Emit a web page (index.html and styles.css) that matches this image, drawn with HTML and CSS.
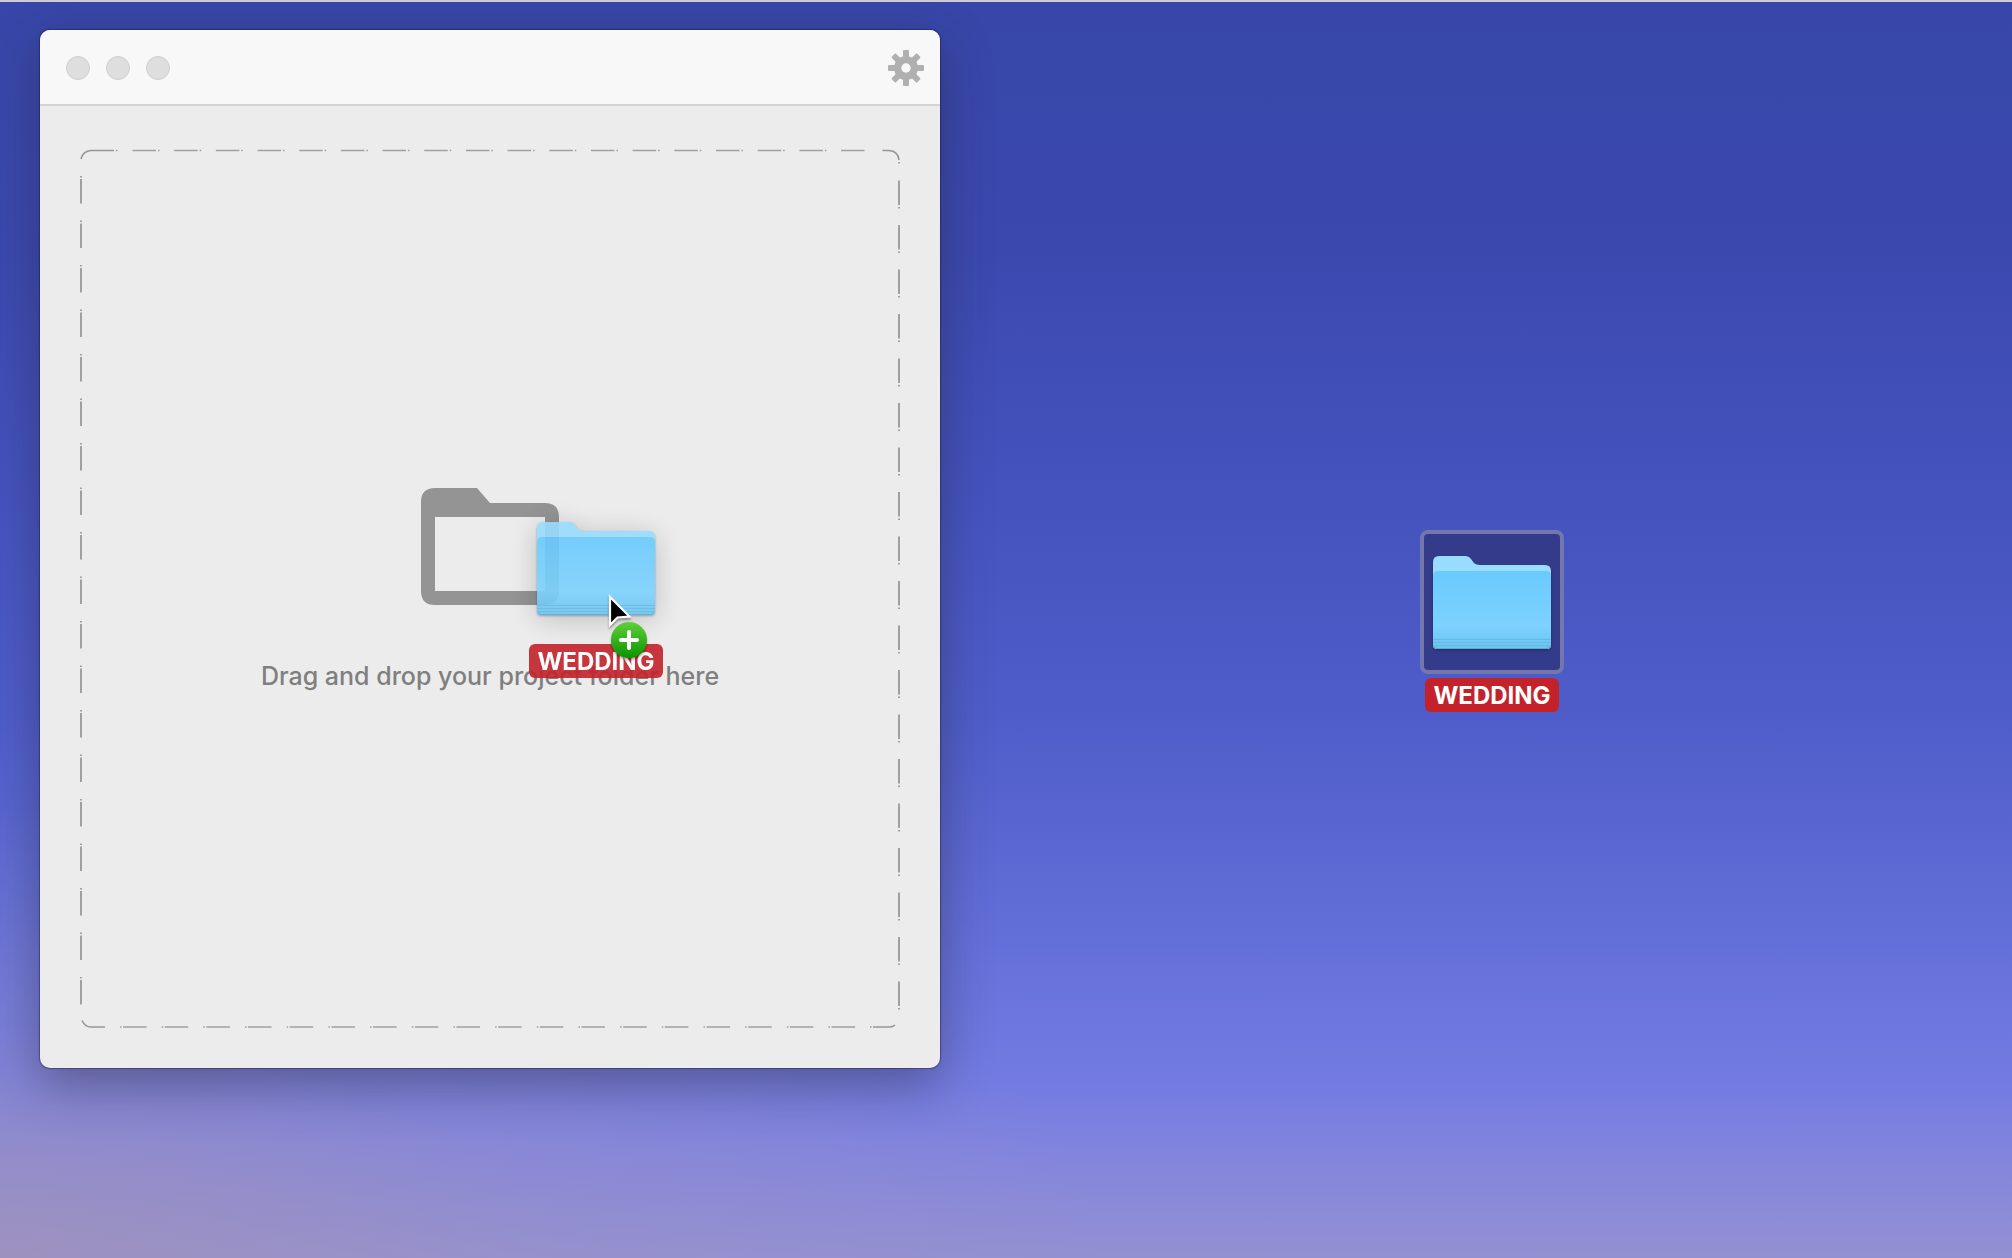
FILE: index.html
```html
<!DOCTYPE html>
<html lang="en">
<head>
<meta charset="utf-8">
<meta name="viewport" content="width=device-width, initial-scale=1">
<title>Project folder</title>
<link rel="stylesheet" href="styles.css">
</head>
<body>
<svg class="defs" aria-hidden="true">
  <defs>
    <linearGradient id="front" x1="0" y1="0" x2="0" y2="1">
      <stop offset="0" stop-color="#69cafd"/>
      <stop offset="0.7" stop-color="#7dd2fe"/>
      <stop offset="0.87" stop-color="#73c9f5"/>
      <stop offset="1" stop-color="#6cc5f0"/>
    </linearGradient>
    <linearGradient id="badge" x1="0" y1="0" x2="0" y2="1">
      <stop offset="0" stop-color="#5fd03a"/>
      <stop offset="1" stop-color="#0b9400"/>
    </linearGradient>
    <symbol id="folder" viewBox="0 0 118 93">
      <path fill="#98dcff" d="M0 6Q0 0 6 0H32Q36 0 38 3L41 7Q43 9 47 9H112Q118 9 118 15V89Q118 93 114 93H4Q0 93 0 89Z"/>
      <path fill="url(#front)" d="M0 20Q0 15 5 15H113Q118 15 118 20V89Q118 93 114 93H4Q0 93 0 89Z"/>
      <path stroke="#5eb5e0" stroke-opacity="0.8" d="M0 83.500H118M0 86.500H118M0 89.500H118"/>
      <path fill="none" stroke="#4a9fcb" stroke-opacity="0.7" d="M1 90Q2 92.500 4 92.500H114Q116 92.500 117 90"/>
    </symbol>
  </defs>
</svg>
<main class="desktop">
  <section class="window" aria-label="Project window">
    <header class="titlebar">
      <div class="lights">
        <button class="light" aria-label="Close"></button>
        <button class="light" aria-label="Minimize"></button>
        <button class="light" aria-label="Zoom"></button>
      </div>
      <button class="settings" aria-label="Settings">
        <svg viewBox="-18 -18 36 36" width="36" height="36">
          <g fill="#b0b0b0">
            <g id="teeth">
              <rect x="-3" y="-18" width="6" height="36" rx="1"/>
              <rect x="-18" y="-3" width="36" height="6" rx="1"/>
            </g>
            <use href="#teeth" transform="rotate(45)"/>
            <circle r="12"/>
          </g>
          <circle r="4.700" fill="#f8f8f8"/>
        </svg>
      </button>
    </header>
    <div class="content">
      <div class="dropzone">
        <svg class="outline" viewBox="0 0 820 879" preserveAspectRatio="none" aria-hidden="true">
          <g fill="none" stroke="#a0a0a0" stroke-width="2">
            <path d="M52.500 1.500H785" stroke-width="1.600" stroke-dasharray="23.500 2 1.500 14.680"/>
            <path d="M1 27V857" stroke-dasharray="1.500 1.500 24.500 17"/>
            <path d="M819 31.500V862" stroke-dasharray="24.500 2 1.500 16.500"/>
            <path d="M40 878H776" stroke-width="1.600" stroke-dasharray="1.500 1.500 23.500 15.180"/>
            <path d="M1 10Q3 2 11 1.500H34M36 1.500H37.500M802.500 1.500H809Q818 2 819 11M819 13V14.500M2 871.500Q5 878 11 878H25M790 878H791.500M793 878H809Q813 878 815 876" stroke="#969696" stroke-width="1.600"/>
          </g>
        </svg>
        <svg class="hint-icon" viewBox="0 0 138 118" width="138" height="118" aria-hidden="true">
          <path fill="#949494" fill-rule="evenodd" d="M14 0H56L69 15H124Q138 15 138 29V103Q138 117 124 117H14Q0 117 0 103V14Q0 0 14 0ZM14 29V103H124V29Z"/>
        </svg>
        <p class="hint">Drag and drop your project folder here</p>
      </div>
    </div>
  </section>

  <figure class="item item-source">
    <span class="thumb thumb-selected"><svg class="folder" width="118" height="93"><use href="#folder"/></svg></span>
    <figcaption class="name">WEDDING</figcaption>
  </figure>

  <figure class="item item-dragged">
    <span class="thumb"><svg class="folder" width="118" height="93"><use href="#folder"/></svg></span>
    <figcaption class="name">WEDDING</figcaption>
  </figure>

  <svg class="pointer" width="44" height="70" viewBox="0 0 44 70" aria-hidden="true">
    <path fill="#000" stroke="#fff" stroke-width="2.200" d="M2 4V32L9.500 24.500L21.500 23.500Z"/>
    <circle cx="21" cy="47" r="18" fill="url(#badge)"/>
    <path stroke="#fff" stroke-width="4" stroke-linecap="round" d="M13 47H29M21 39V55"/>
  </svg>
</main>
</body>
</html>
```
FILE: styles.css
```css
* {
  box-sizing: border-box;
}

body {
  margin: 0;
  font-family: Inter, "Liberation Sans", sans-serif;
}

button {
  padding: 0;
  border: 0;
  background: none;
}

.defs {
  position: absolute;
  width: 0;
  height: 0;
}

.desktop {
  position: relative;
  min-height: 100vh;
  overflow: hidden;
  padding: 28px 40px 190px;
  border-top: 2px solid #cfcbd6;
  border-bottom: 1px solid #4b4880;
  background:
    radial-gradient(ellipse 55% 36% at 0 100%, rgba(160, 146, 184, 0.75), rgba(160, 148, 190, 0.25) 50%, rgba(160, 148, 190, 0) 100%),
    linear-gradient(180deg, #3746a8 0%, #3b49af 20%, #4553bf 40%, #4f5dca 57%, #6470d9 75%, #737be2 86%, #8385dd 92%, #9390d2 100%);
}

.window {
  display: flex;
  flex-direction: column;
  width: 100%;
  max-width: 900px;
  min-height: calc(100vh - 220px);
  border-radius: 10px;
  background: #ececec;
  box-shadow: 0 0 1px 1px rgba(20, 20, 60, 0.4), 0 16px 50px rgba(40, 40, 60, 0.45);
}

.titlebar {
  display: flex;
  justify-content: space-between;
  align-items: center;
  height: 76px;
  padding: 2px 16px 0 26px;
  border-bottom: 2px solid #d4d4d4;
  border-radius: 10px 10px 0 0;
  background: #f8f8f8;
}

.lights {
  display: flex;
  gap: 16px;
}

.light {
  width: 24px;
  height: 24px;
  border: 1px solid #cfcfcf;
  border-radius: 50%;
  background: #dedede;
}

.settings svg {
  display: block;
}

.content {
  display: flex;
  flex: 1;
  padding: 43px 40px 40px;
}

.dropzone {
  position: relative;
  display: flex;
  flex: 1;
  flex-direction: column;
  align-items: center;
  justify-content: center;
  gap: 52px;
  padding-top: 4px;
}

.outline {
  position: absolute;
  inset: 0;
  width: 100%;
  height: 100%;
}

.hint {
  margin: 0;
  color: #7f7f7f;
  font-size: 25px;
  font-weight: 500;
  line-height: 36px;
  white-space: nowrap;
}

.item {
  position: absolute;
  display: flex;
  flex-direction: column;
  align-items: center;
  gap: 4px;
  margin: 0;
}

.item-source {
  left: 1420px;
  top: 528px;
}

.item-dragged {
  left: 524px;
  top: 494px;
  opacity: 0.9;
}

.thumb {
  display: flex;
  align-items: center;
  justify-content: center;
  width: 144px;
  height: 144px;
  border: 4px solid transparent;
  border-radius: 8px;
}

.thumb-selected {
  border-color: #7377ae;
  background: #343b8a;
}

.folder {
  filter: drop-shadow(0 1px 1px rgba(0, 0, 0, 0.3));
}

.item-dragged .folder {
  filter: drop-shadow(0 1px 1px rgba(0, 0, 0, 0.3)) drop-shadow(0 4px 14px rgba(0, 0, 0, 0.22));
}

.name {
  padding: 1px 8px 0;
  border-radius: 6px;
  background: #c4222b;
  color: #fff;
  font-size: 24px;
  font-weight: 700;
  line-height: 33px;
}

.pointer {
  position: absolute;
  left: 608px;
  top: 591px;
  filter: drop-shadow(0 2px 1px rgba(0, 0, 0, 0.35));
}
```
